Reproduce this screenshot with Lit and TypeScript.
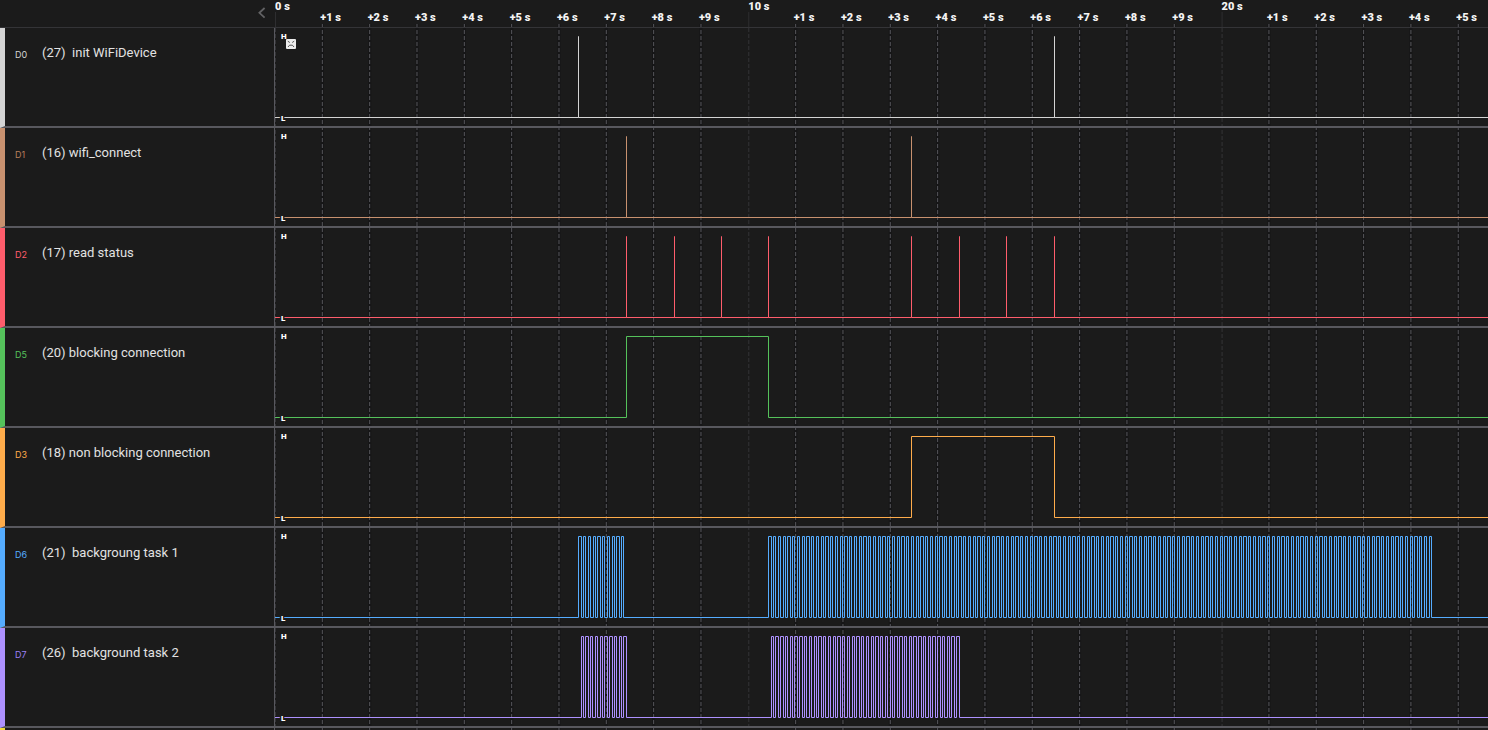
import { LitElement, html, svg, css, nothing } from "lit";
import { customElement, property, state } from "lit/decorators.js";
import { styleMap } from "lit/directives/style-map.js";

interface Channel {
  id: string;
  name: string;
  color: string;
  ink: string;
  edges: number[];
}

const SECOND = 47.33;
const LABEL_ROOM = 24;
const HIGH = 8;
const LOW = 89;
const FAR = 4000;

/** Edges of a regular pulse train, snapped to whole pixels. */
const train = (start: number, end: number, count: number): number[] => {
  const step = (end - start) / (count * 2 - 1);
  return Array.from({ length: count * 2 }, (_, k) => Math.floor(start + step * k + 0.001));
};

/** Very short pulses: each rises and falls on the same pixel. */
const pulses = (...at: number[]): number[] => at.flatMap((x) => [x, x]);

const CHANNELS: Channel[] = [
  { id: "D0", name: "(27)  init WiFiDevice", color: "#d4d4d4", ink: "#d4d4d4", edges: pulses(303, 779) },
  { id: "D1", name: "(16) wifi_connect", color: "#c8916f", ink: "#b87f5c", edges: pulses(351, 636) },
  { id: "D2", name: "(17) read status", color: "#ff5d6c", ink: "#ff5d6c", edges: pulses(351, 399, 446, 493, 636, 684, 731, 779) },
  { id: "D5", name: "(20) blocking connection", color: "#55c25b", ink: "#55c25b", edges: [351, 493] },
  { id: "D3", name: "(18) non blocking connection", color: "#ffac4b", ink: "#ffac4b", edges: [636, 779] },
  {
    id: "D6",
    name: "(21)  backgroung task 1",
    color: "#55acff",
    ink: "#55acff",
    edges: [...train(303.75, 348.9, 10), ...train(493.8, 1156.4, 140)],
  },
  {
    id: "D7",
    name: "(26)  background task 2",
    color: "#ad91ff",
    ink: "#9a7ff5",
    edges: [...train(306.1, 351.3, 10), ...train(496.2, 684.1, 40)],
  },
];

const wave = (edges: number[]): string => {
  let high = false;
  let d = `M0 ${LOW}.5`;
  for (const x of edges) {
    high = !high;
    d += `H${x}.5V${high ? HIGH : LOW}.5`;
  }
  return `${d}H${FAR}`;
};

@customElement("time-grid")
export class TimeGrid extends LitElement {
  @state() private span = 0;

  private observer = new ResizeObserver(([entry]) => {
    this.span = entry.contentRect.width;
  });

  connectedCallback() {
    super.connectedCallback();
    this.observer.observe(this);
  }

  disconnectedCallback() {
    this.observer.disconnect();
    super.disconnectedCallback();
  }

  static styles = css`
    :host {
      display: block;
      overflow: hidden;
    }
    svg {
      display: block;
      width: 100%;
      height: 100%;
    }
    text {
      font: 900 11px Roboto, sans-serif;
      fill: #f4f4f4;
    }
    .shade {
      stroke: #161617;
      stroke-width: 3px;
    }
    .minor {
      stroke: #56565b;
      stroke-dasharray: 4 2;
    }
    .major {
      stroke: #343437;
      stroke-dasharray: 4 2;
    }
    .stem {
      stroke: #2e2e30;
    }
  `;

  private tick(n: number) {
    const x = n * SECOND;
    if (n % 10 === 0) {
      return svg`
        <line class="stem" x1=${x + 0.5} x2=${x + 0.5} y1="12" y2="28" />
        <line class="major" x1=${x + 0.5} x2=${x + 0.5} y1="28" y2=${FAR} />
        <text x=${x} y="10">${n} s</text>
      `;
    }
    return svg`
      <line class="shade" x1=${x} x2=${x} y1="24" y2=${FAR} />
      <line class="minor" x1=${x} x2=${x} y1="24" y2=${FAR} />
      <text x=${x - 2} y="21">+${n % 10} s</text>
    `;
  }

  render() {
    const count = Math.max(0, Math.floor((this.span - LABEL_ROOM) / SECOND) + 1);
    return html`<svg>${Array.from({ length: count }, (_, n) => this.tick(n))}</svg>`;
  }
}

@customElement("channel-row")
export class ChannelRow extends LitElement {
  @property({ attribute: false }) channel!: Channel;
  @property({ type: Boolean }) marker = false;

  static styles = css`
    .row {
      display: grid;
      grid-template-columns: 270px minmax(0, 1fr);
      border-left: 5px solid var(--channel);
      border-bottom: 2px solid #58585e;
    }
    .label {
      display: flex;
      align-items: flex-start;
      padding: 16px 0 0 10px;
      border-right: 1px solid #58585e;
    }
    .id {
      width: 27px;
      font: 9px/22px Inter, sans-serif;
      color: var(--ink);
    }
    .name {
      font: 13px/18px Roboto, sans-serif;
      color: #e2e2e2;
      white-space: pre;
    }
    .plot {
      display: block;
      width: 100%;
      height: 98px;
    }
    .wave {
      fill: none;
      stroke: var(--channel);
    }
    .level {
      font: 900 8px Roboto, sans-serif;
      fill: #fff;
      stroke: #1b1b1b;
      stroke-width: 3px;
      paint-order: stroke;
    }
  `;

  render() {
    const c = this.channel;
    return html`
      <div class="row" style=${styleMap({ "--channel": c.color, "--ink": c.ink })}>
        <div class="label"><span class="id">${c.id}</span><span class="name">${c.name}</span></div>
        <svg class="plot">
          <path class="wave" d=${wave(c.edges)} />
          <text class="level" x="6" y="11">H</text>
          <text class="level" x="6" y="93">L</text>
          ${this.marker
            ? svg`
              <rect x="11" y="11" width="10" height="10" rx="1" fill="#ececec" />
              <path d="M12.8 13.2l2 1.3M19.2 13.2l-2 1.3M13 19l1.6-1.8h2.8l1.6 1.8" fill="none" stroke="#444" stroke-width="0.9" />
            `
            : nothing}
        </svg>
      </div>
    `;
  }
}

@customElement("app-root")
export class AppRoot extends LitElement {
  static styles = css`
    :host {
      display: grid;
      grid-template-columns: 275px minmax(0, 1fr);
      height: 100vh;
      overflow: hidden;
      background: #1b1b1b;
    }
    time-grid {
      grid-area: 1 / 2;
      min-height: 0;
    }
    .board {
      grid-area: 1 / 1 / 2 / 3;
      display: flex;
      flex-direction: column;
      min-height: 0;
    }
    .header {
      flex: none;
      display: flex;
      align-items: center;
      height: 27px;
      border-bottom: 1px solid #343437;
    }
    .collapse {
      display: flex;
      margin-left: 254px;
      padding: 0;
      border: 0;
      background: none;
      color: #626264;
      cursor: pointer;
    }
    channel-row {
      flex: none;
    }
    .next {
      flex: 1;
      box-sizing: border-box;
      width: 275px;
      border-left: 5px solid #f0d83a;
      border-right: 1px solid #58585e;
    }
  `;

  render() {
    return html`
      <time-grid></time-grid>
      <div class="board">
        <div class="header">
          <button class="collapse" aria-label="Collapse channel list">
            <svg width="16" height="16" viewBox="0 0 16 16" fill="none" stroke="currentColor" stroke-width="1.8">
              <path d="M10.6 2L5.4 6.8l5.2 4.8" />
            </svg>
          </button>
        </div>
        ${CHANNELS.map((c, i) => html`<channel-row .channel=${c} ?marker=${i === 0}></channel-row>`)}
        <div class="next"></div>
      </div>
    `;
  }
}
